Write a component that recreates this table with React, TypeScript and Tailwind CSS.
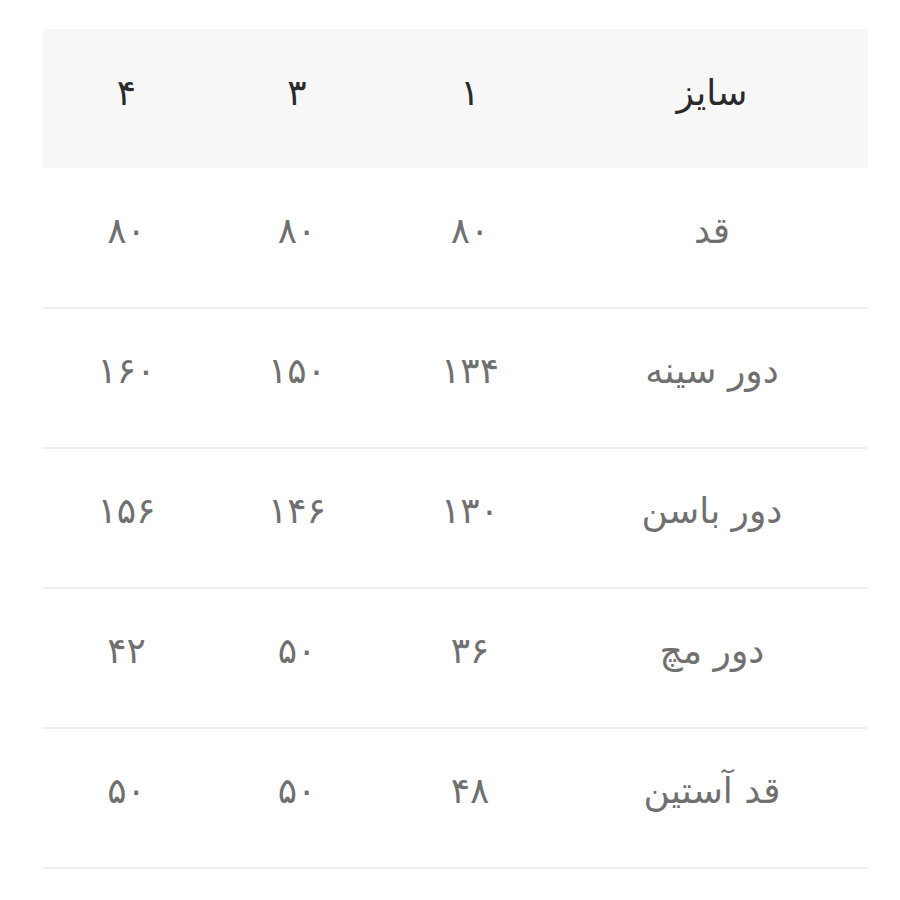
import React from 'react';

const header = ['سایز', '۱', '۳', '۴'];

const rows: string[][] = [
  ['قد', '۸۰', '۸۰', '۸۰'],
  ['دور سینه', '۱۳۴', '۱۵۰', '۱۶۰'],
  ['دور باسن', '۱۳۰', '۱۴۶', '۱۵۶'],
  ['دور مچ', '۳۶', '۵۰', '۴۲'],
  ['قد آستین', '۴۸', '۵۰', '۵۰'],
];

export default function App() {
  return (
    <div className="bg-white w-[900px] h-[900px] pt-[29px] pr-[32px] pl-[43px]" style={{ fontFamily: '"DejaVu Sans", sans-serif' }}>
      <table dir="rtl" className="w-[825px] border-collapse table-fixed">
        <colgroup>
          <col className="w-[312px]" />
          <col className="w-[172px]" />
          <col className="w-[174px]" />
          <col className="w-[167px]" />
        </colgroup>
        <thead>
          <tr className="bg-[#f7f7f7] h-[139px]">
            {header.map((h, i) => (
              <th key={i} className="text-center font-normal text-[36px] text-[#2a2a2a] pb-[12px]">
                {h}
              </th>
            ))}
          </tr>
        </thead>
        <tbody>
          {rows.map((r, i) => (
            <tr key={i} className="h-[140px] border-b-2 border-[#efefef]">
              {r.map((c, j) => (
                <td key={j} className="text-center text-[36px] text-[#707070] pb-[14px]">
                  {c}
                </td>
              ))}
            </tr>
          ))}
        </tbody>
      </table>
    </div>
  );
}
